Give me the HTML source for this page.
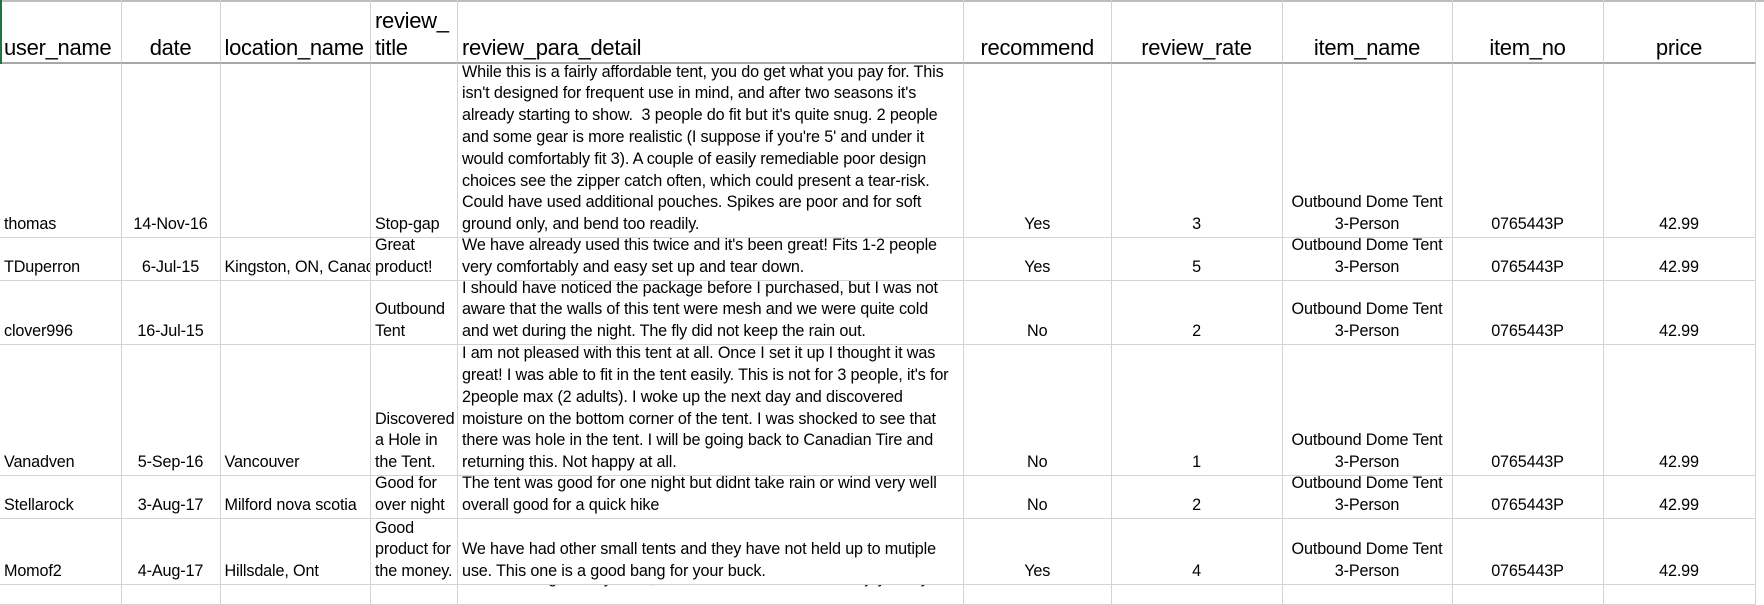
<!DOCTYPE html>
<html><head><meta charset="utf-8"><style>
html,body{margin:0;padding:0;background:#fff;}
body{width:1764px;height:590px;overflow:hidden;position:relative;font-family:"Liberation Sans",sans-serif;color:#000;}
.c{position:absolute;box-sizing:border-box;display:flex;flex-direction:column;justify-content:flex-end;overflow:hidden;font-size:16.2px;line-height:21.8px;padding:0 4px 1px 4px;white-space:nowrap;letter-spacing:-0.15px;border-right:1px solid #d4d4d4;border-bottom:1px solid #d4d4d4;}
.h{font-size:22px;line-height:27px;padding-bottom:1px;letter-spacing:-0.3px;border-bottom:2px solid #a6a6a6;}
.ctr{text-align:center;}
</style></head><body>
<div style="position:absolute;left:0;top:0;width:1764px;height:2px;background:#bdbdbd"></div>
<div style="position:absolute;left:0;top:0;width:2px;height:64px;background:#217346;z-index:2"></div>

<div class="c h" style="left:0;top:0;width:121.5px;height:64px">user_name</div>
<div class="c h ctr" style="left:121.5px;top:0;width:99px;height:64px">date</div>
<div class="c h" style="left:220.5px;top:0;width:150.5px;height:64px">location_name</div>
<div class="c h" style="left:371px;top:0;width:87px;height:64px">review_<br>title</div>
<div class="c h" style="left:458px;top:0;width:506px;height:64px">review_para_detail</div>
<div class="c h ctr" style="left:964px;top:0;width:147.5px;height:64px">recommend</div>
<div class="c h ctr" style="left:1111.5px;top:0;width:171px;height:64px">review_rate</div>
<div class="c h ctr" style="left:1282.5px;top:0;width:170px;height:64px">item_name</div>
<div class="c h ctr" style="left:1452.5px;top:0;width:151px;height:64px">item_no</div>
<div class="c h ctr" style="left:1603.5px;top:0;width:152px;height:64px">price</div>

<div class="c" style="left:0;top:64px;width:121.5px;height:174px">thomas</div>
<div class="c ctr" style="left:121.5px;top:64px;width:99px;height:174px">14-Nov-16</div>
<div class="c" style="left:220.5px;top:64px;width:150.5px;height:174px"></div>
<div class="c" style="left:371px;top:64px;width:87px;height:174px">Stop-gap</div>
<div class="c" style="left:458px;top:64px;width:506px;height:174px">While this is a fairly affordable tent, you do get what you pay for. This<br>isn't designed for frequent use in mind, and after two seasons it's<br>already starting to show.&nbsp; 3 people do fit but it's quite snug. 2 people<br>and some gear is more realistic (I suppose if you're 5' and under it<br>would comfortably fit 3). A couple of easily remediable poor design<br>choices see the zipper catch often, which could present a tear-risk.<br>Could have used additional pouches. Spikes are poor and for soft<br>ground only, and bend too readily.</div>
<div class="c ctr" style="left:964px;top:64px;width:147.5px;height:174px">Yes</div>
<div class="c ctr" style="left:1111.5px;top:64px;width:171px;height:174px">3</div>
<div class="c ctr" style="left:1282.5px;top:64px;width:170px;height:174px">Outbound Dome Tent<br>3-Person</div>
<div class="c ctr" style="left:1452.5px;top:64px;width:151px;height:174px">0765443P</div>
<div class="c ctr" style="left:1603.5px;top:64px;width:152px;height:174px">42.99</div>

<div class="c" style="left:0;top:238px;width:121.5px;height:43px">TDuperron</div>
<div class="c ctr" style="left:121.5px;top:238px;width:99px;height:43px">6-Jul-15</div>
<div class="c" style="left:220.5px;top:238px;width:150.5px;height:43px">Kingston, ON, Canada</div>
<div class="c" style="left:371px;top:238px;width:87px;height:43px">Great<br>product!</div>
<div class="c" style="left:458px;top:238px;width:506px;height:43px">We have already used this twice and it's been great! Fits 1-2 people<br>very comfortably and easy set up and tear down.</div>
<div class="c ctr" style="left:964px;top:238px;width:147.5px;height:43px">Yes</div>
<div class="c ctr" style="left:1111.5px;top:238px;width:171px;height:43px">5</div>
<div class="c ctr" style="left:1282.5px;top:238px;width:170px;height:43px">Outbound Dome Tent<br>3-Person</div>
<div class="c ctr" style="left:1452.5px;top:238px;width:151px;height:43px">0765443P</div>
<div class="c ctr" style="left:1603.5px;top:238px;width:152px;height:43px">42.99</div>

<div class="c" style="left:0;top:281px;width:121.5px;height:64px">clover996</div>
<div class="c ctr" style="left:121.5px;top:281px;width:99px;height:64px">16-Jul-15</div>
<div class="c" style="left:220.5px;top:281px;width:150.5px;height:64px"></div>
<div class="c" style="left:371px;top:281px;width:87px;height:64px">Outbound<br>Tent</div>
<div class="c" style="left:458px;top:281px;width:506px;height:64px">I should have noticed the package before I purchased, but I was not<br>aware that the walls of this tent were mesh and we were quite cold<br>and wet during the night. The fly did not keep the rain out.</div>
<div class="c ctr" style="left:964px;top:281px;width:147.5px;height:64px">No</div>
<div class="c ctr" style="left:1111.5px;top:281px;width:171px;height:64px">2</div>
<div class="c ctr" style="left:1282.5px;top:281px;width:170px;height:64px">Outbound Dome Tent<br>3-Person</div>
<div class="c ctr" style="left:1452.5px;top:281px;width:151px;height:64px">0765443P</div>
<div class="c ctr" style="left:1603.5px;top:281px;width:152px;height:64px">42.99</div>

<div class="c" style="left:0;top:345px;width:121.5px;height:131px">Vanadven</div>
<div class="c ctr" style="left:121.5px;top:345px;width:99px;height:131px">5-Sep-16</div>
<div class="c" style="left:220.5px;top:345px;width:150.5px;height:131px">Vancouver</div>
<div class="c" style="left:371px;top:345px;width:87px;height:131px">Discovered<br>a Hole in<br>the Tent.</div>
<div class="c" style="left:458px;top:345px;width:506px;height:131px">I am not pleased with this tent at all. Once I set it up I thought it was<br>great! I was able to fit in the tent easily. This is not for 3 people, it's for<br>2people max (2 adults). I woke up the next day and discovered<br>moisture on the bottom corner of the tent. I was shocked to see that<br>there was hole in the tent. I will be going back to Canadian Tire and<br>returning this. Not happy at all.</div>
<div class="c ctr" style="left:964px;top:345px;width:147.5px;height:131px">No</div>
<div class="c ctr" style="left:1111.5px;top:345px;width:171px;height:131px">1</div>
<div class="c ctr" style="left:1282.5px;top:345px;width:170px;height:131px">Outbound Dome Tent<br>3-Person</div>
<div class="c ctr" style="left:1452.5px;top:345px;width:151px;height:131px">0765443P</div>
<div class="c ctr" style="left:1603.5px;top:345px;width:152px;height:131px">42.99</div>

<div class="c" style="left:0;top:476px;width:121.5px;height:43px">Stellarock</div>
<div class="c ctr" style="left:121.5px;top:476px;width:99px;height:43px">3-Aug-17</div>
<div class="c" style="left:220.5px;top:476px;width:150.5px;height:43px">Milford nova scotia</div>
<div class="c" style="left:371px;top:476px;width:87px;height:43px">Good for<br>over night</div>
<div class="c" style="left:458px;top:476px;width:506px;height:43px">The tent was good for one night but didnt take rain or wind very well<br>overall good for a quick hike</div>
<div class="c ctr" style="left:964px;top:476px;width:147.5px;height:43px">No</div>
<div class="c ctr" style="left:1111.5px;top:476px;width:171px;height:43px">2</div>
<div class="c ctr" style="left:1282.5px;top:476px;width:170px;height:43px">Outbound Dome Tent<br>3-Person</div>
<div class="c ctr" style="left:1452.5px;top:476px;width:151px;height:43px">0765443P</div>
<div class="c ctr" style="left:1603.5px;top:476px;width:152px;height:43px">42.99</div>

<div class="c" style="left:0;top:519px;width:121.5px;height:66px">Momof2</div>
<div class="c ctr" style="left:121.5px;top:519px;width:99px;height:66px">4-Aug-17</div>
<div class="c" style="left:220.5px;top:519px;width:150.5px;height:66px">Hillsdale, Ont</div>
<div class="c" style="left:371px;top:519px;width:87px;height:66px">Good<br>product for<br>the money.</div>
<div class="c" style="left:458px;top:519px;width:506px;height:66px">We have had other small tents and they have not held up to mutiple<br>use. This one is a good bang for your buck.</div>
<div class="c ctr" style="left:964px;top:519px;width:147.5px;height:66px">Yes</div>
<div class="c ctr" style="left:1111.5px;top:519px;width:171px;height:66px">4</div>
<div class="c ctr" style="left:1282.5px;top:519px;width:170px;height:66px">Outbound Dome Tent<br>3-Person</div>
<div class="c ctr" style="left:1452.5px;top:519px;width:151px;height:66px">0765443P</div>
<div class="c ctr" style="left:1603.5px;top:519px;width:152px;height:66px">42.99</div>

<div class="c" style="left:0;top:585px;width:121.5px;height:20px"></div>
<div class="c" style="left:121.5px;top:585px;width:99px;height:20px"></div>
<div class="c" style="left:220.5px;top:585px;width:150.5px;height:20px"></div>
<div class="c" style="left:371px;top:585px;width:87px;height:20px"></div>
<div class="c" style="left:458px;top:585px;width:506px;height:20px;justify-content:flex-start"><span style="position:relative;top:-17px">We are a large husky adult, one of us own two tents to enjoy every week</span></div>
<div class="c" style="left:964px;top:585px;width:147.5px;height:20px"></div>
<div class="c" style="left:1111.5px;top:585px;width:171px;height:20px"></div>
<div class="c" style="left:1282.5px;top:585px;width:170px;height:20px"></div>
<div class="c" style="left:1452.5px;top:585px;width:151px;height:20px"></div>
<div class="c" style="left:1603.5px;top:585px;width:152px;height:20px"></div>
</body></html>
